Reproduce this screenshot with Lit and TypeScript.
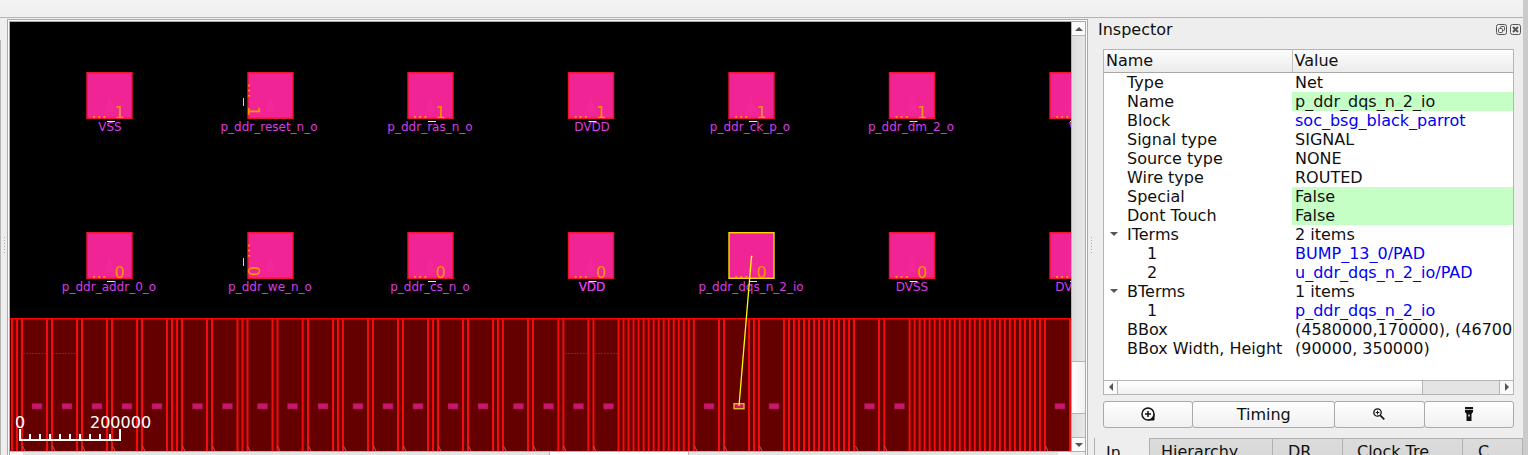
import { LitElement, html, svg, css, nothing } from "lit";
import { customElement } from "lit/decorators.js";
import { classMap } from "lit/directives/class-map.js";

const range = (start: number, count: number, step: number) =>
  Array.from({ length: count }, (_, i) => start + i * step);

/* Edges of the IO cells along the pad ring. */
const CELL_EDGES = [
  12, 17, 22, 47, 52, 77, 82, 107, 112, 137, 142, 167, 172, 177, 182, 207, 212,
  237.5, 242.5, 247.5, 272.5, 277.5, 302.7, 308, 333, 338, 343, 368, 373, 398,
  403, 428, 433, 438, 463, 468, 493, 498, 503, 528, 533, 558.4, 563.4, 588.4,
  593.5,
  ...range(618.5, 16, 5.02),
  719, 724, 749, 754, 759,
  ...range(784, 15, 5),
  879, 884.3,
  ...range(909.6, 28, 5.015),
  1070,
];

const PINS = [
  37, 67, 97, 127, 157, 197.5, 227.5, 262.5, 292.5, 323, 358, 388, 418, 453,
  483, 518.5, 548.5, 578.5, 608.5, 709, 774, 869.5, 899.5, 1060,
];

const CORNERS = [
  22, 52, 82, 112, 142, 182, 212, 247, 277, 308, 343, 373, 403, 438, 468, 503,
  533, 563, 593, 694, 724, 759, 855, 884, 1045,
];

interface Bump {
  x: number;
  label: string;
  at: number;
  turned?: boolean;
  selected?: boolean;
  doubled?: boolean;
  partial?: boolean;
}

const BUMP_ROWS: { y: number; digit: string; bumps: Bump[] }[] = [
  {
    y: 72,
    digit: "1",
    bumps: [
      { x: 86.5, label: "VSS", at: 110 },
      { x: 247.5, label: "p_ddr_reset_n_o", at: 269, turned: true },
      { x: 407.5, label: "p_ddr_ras_n_o", at: 430 },
      { x: 568, label: "DVDD", at: 592 },
      { x: 728.5, label: "p_ddr_ck_p_o", at: 750 },
      { x: 889, label: "p_ddr_dm_2_o", at: 911 },
      { x: 1049.5, label: "VDD", at: 1082, partial: true },
    ],
  },
  {
    y: 232,
    digit: "0",
    bumps: [
      { x: 86.5, label: "p_ddr_addr_0_o", at: 109 },
      { x: 247.5, label: "p_ddr_we_n_o", at: 270, turned: true },
      { x: 407.5, label: "p_ddr_cs_n_o", at: 430 },
      { x: 568, label: "VDD", at: 592, doubled: true },
      { x: 728.5, label: "p_ddr_dqs_n_2_io", at: 751, selected: true },
      { x: 889, label: "DVSS", at: 912 },
      { x: 1049.5, label: "DVDD", at: 1073, partial: true },
    ],
  },
];

@customElement("layout-view")
class LayoutView extends LitElement {
  static styles = css`
    :host {
      display: grid;
      grid-template-columns: 1fr 14px;
      grid-template-rows: auto 14px;
      border: 1px solid #aaa;
      outline: 1px solid #fafafa;
      outline-offset: 0;
      min-width: 0;
    }
    svg.chip {
      display: block;
      width: 100%;
      background: #000;
      font-family: "DejaVu Sans", sans-serif;
    }
    .net { font-size: 12px; fill: #d83ce6; text-anchor: middle; }
    .inst { font-size: 16px; fill: #ff9500; }
    .ruler { font-size: 16px; fill: #fff; }
    .vbar {
      display: flex;
      flex-direction: column;
      background: linear-gradient(90deg, #dcdcdc, #e8e8e8);
      border-left: 1px solid #b4b4b4;
    }
    .hbar {
      display: flex;
      background: #e4e4e4;
      border-top: 1px solid #b4b4b4;
    }
    .corner { background: #eee; border-top: 1px solid #b4b4b4; }
    .step {
      display: grid;
      place-items: center;
      flex: none;
      width: 13px;
      height: 13px;
      padding: 0;
      border: 0;
      background: #fafafa;
    }
    .up { border-bottom: 1px solid #b4b4b4; height: 14px; }
    .down { border-top: 1px solid #b4b4b4; height: 14px; }
    .fill { flex: 325; }
    .vthumb {
      flex: 51;
      background: linear-gradient(90deg, #fff, #f0f0f0);
      border: solid #b4b4b4;
      border-width: 1px 0;
    }
    .vrest { flex: 23; }
    .hleft { flex: 526; }
    .hthumb { flex: 138; background: #fff; border: solid #b4b4b4; border-width: 0 1px; }
    .hright { flex: 369; }
  `;

  private bump(b: Bump, y: number, digit: string) {
    const edge = b.selected ? "#ffd800" : "#f01428";
    const number = b.partial ? nothing : svg`<text x="23">${digit}</text>`;
    const text = b.turned
      ? svg`<g class="inst" transform="translate(${b.x + 0.5} ${y + 11}) rotate(90)">
            <text>...</text>${number}
          </g>
          <path d="M${b.x - 4} ${y + 26}v8" stroke="#eaea20"/>`
      : svg`<g class="inst" transform="translate(${b.x + 5} ${y + 46})">
            <text>...</text>${number}
          </g>
          <path d="M${b.x + 20.5} ${y + 49.5}h8" stroke="#ffff20"/>`;
    return svg`
      <rect x=${b.x + 0.5} y=${y + 0.7} width="45" height="45.6" fill="#f02495"
        stroke=${edge} stroke-width="1.4"/>
      <path d="M${b.x + 23} ${y + 24}l5 16h-10z" fill="#f22898"/>
      ${text}
      <text class="net" x=${b.at} y=${y + 59}>${b.label}</text>
      ${b.doubled ? svg`<text class="net" x=${b.at} y=${y + 59}>${b.label}</text>` : nothing}
    `;
  }

  render() {
    return html`
      <svg class="chip" height="429" role="img" aria-label="Chip layout">
        <g transform="translate(-10 -22)">
          ${BUMP_ROWS.map((r) => r.bumps.map((b) => this.bump(b, r.y, r.digit)))}
          <rect x="10" y="318" width="1061" height="140" fill="#640000"/>
          ${CELL_EDGES.map((x) => svg`<rect x=${x - 1} y="319" width="2" height="140" fill="#f40c0c"/>`)}
          <rect x="10" y="318" width="1061" height="1.4" fill="#ff0000"/>
          <path d="M23 353.5H46M53 353.5H76M565 353.5H588M595 353.5H618" stroke="#8c2020" stroke-dasharray="2 1"/>
          ${CORNERS.map((x) => svg`<path d="M${x + 0.5} 446l2.5 5" stroke="#b06060" fill="none"/>`)}
          ${PINS.map((x) => svg`<rect x=${x - 5} y="403.5" width="10" height="5.5" fill="#c8186c" stroke="#96104c" stroke-width=".5"/>`)}
          <rect x="734" y="403.7" width="10" height="5" fill="#c8186c" stroke="#e6b41e" stroke-width="1.4"/>
          <path d="M752.5 256.500h-1L739 406" fill="none" stroke="#ffff00" stroke-width="1.3"/>
          <text class="ruler" x="15" y="428">0</text>
          <text class="ruler" x="90" y="428">200000</text>
          <path d="M20 429v11h100v-11" fill="none" stroke="#fff" stroke-width="2"/>
          <path d=${range(30, 9, 10).map((x) => `M${x} 434v6`).join("")} stroke="#fff" stroke-width="2"/>
        </g>
      </svg>
      <div class="vbar">
        <button class="step up" aria-label="Scroll up"><svg width="8" height="4"><path d="M0 4 4 0l4 4z" fill="#555"/></svg></button>
        <div class="fill"></div>
        <div class="vthumb"></div>
        <div class="vrest"></div>
        <button class="step down" aria-label="Scroll down"><svg width="8" height="4"><path d="M0 0h8L4 4z" fill="#555"/></svg></button>
      </div>
      <div class="hbar">
        <button class="step" aria-label="Scroll left"><svg width="4" height="8"><path d="M4 0v8L0 4z" fill="#555"/></svg></button>
        <div class="hleft"></div>
        <div class="hthumb"></div>
        <div class="hright"></div>
        <button class="step" aria-label="Scroll right"><svg width="4" height="8"><path d="M0 0v8l4-4z" fill="#555"/></svg></button>
      </div>
      <div class="corner"></div>
    `;
  }
}

interface Prop {
  name: string;
  value: string;
  link?: boolean;
  editable?: boolean;
  open?: boolean;
  child?: boolean;
}

const PROPS: Prop[] = [
  { name: "Type", value: "Net" },
  { name: "Name", value: "p_ddr_dqs_n_2_io", editable: true },
  { name: "Block", value: "soc_bsg_black_parrot", link: true },
  { name: "Signal type", value: "SIGNAL" },
  { name: "Source type", value: "NONE" },
  { name: "Wire type", value: "ROUTED" },
  { name: "Special", value: "False", editable: true },
  { name: "Dont Touch", value: "False", editable: true },
  { name: "ITerms", value: "2 items", open: true },
  { name: "1", value: "BUMP_13_0/PAD", link: true, child: true },
  { name: "2", value: "u_ddr_dqs_n_2_io/PAD", link: true, child: true },
  { name: "BTerms", value: "1 items", open: true },
  { name: "1", value: "p_ddr_dqs_n_2_io", link: true, child: true },
  { name: "BBox", value: "(4580000,170000), (4670000,520000)" },
  { name: "BBox Width, Height", value: "(90000, 350000)" },
];

@customElement("inspector-panel")
class InspectorPanel extends LitElement {
  static styles = css`
    :host {
      display: flex;
      flex-direction: column;
      font: 16px/19px "DejaVu Sans", sans-serif;
      color: #101010;
    }
    button { font: inherit; color: inherit; padding: 0; }
    .title { display: flex; align-items: center; height: 20px; padding: 0 2px 0 4px; }
    h2 { flex: 1; margin: 0; font: inherit; }
    .dock { display: grid; width: 11px; height: 11px; margin-left: 3px; border: 0; background: none; }
    .frame {
      display: flex;
      flex-direction: column;
      margin: 10px 9px 0;
      border: 1px solid #b4b4b4;
      background: #fff;
    }
    .rows { overflow: hidden; padding-bottom: 22px; }
    table { width: 100%; table-layout: fixed; border-collapse: collapse; }
    .name { width: 188px; }
    th {
      box-sizing: border-box;
      height: 22px;
      padding: 0 2px;
      text-align: left;
      font-weight: normal;
      background: linear-gradient(#fdfdfd, #ebebeb);
      border-bottom: 1px solid #a8a8a8;
    }
    th + th { border-left: 1px solid #c4c4c4; }
    td { height: 19px; padding: 0 0 0 3px; white-space: nowrap; overflow: hidden; }
    .key { padding-left: 23px; }
    .key.open { padding-left: 6px; }
    .key.child { padding-left: 43px; }
    .twist { width: 17px; height: 19px; border: 0; background: none; text-align: left; vertical-align: top; }
    .twist svg { display: block; }
    .editable { background: #c5ffc5; }
    a { color: #0000f0; text-decoration: none; }
    .scroll { display: flex; height: 13px; border-top: 1px solid #b4b4b4; background: #e4e4e4; }
    .step { display: grid; place-items: center; width: 14px; border: 0; background: #fafafa; }
    .step.prev { border-right: 1px solid #b4b4b4; }
    .step.next { border-left: 1px solid #b4b4b4; }
    .thumb { flex: 305; background: linear-gradient(#fff, #f0f0f0); border-right: 1px solid #b4b4b4; }
    .rest { flex: 76; }
    .actions { display: flex; margin: 6px 9px 0; }
    .actions button {
      display: grid;
      place-items: center;
      flex: 90;
      height: 27px;
      border: 1px solid #aaa;
      border-radius: 3px;
      background: linear-gradient(#fff, #f0f0f0);
    }
    .actions button + button { margin-left: -1px; }
    .actions .wide { flex: 143; }
    .tabs { display: flex; margin-top: 10px; }
    .tabs button {
      flex: none;
      box-sizing: border-box;
      height: 24px;
      padding: 3px 0 0 15px;
      text-align: left;
      border: solid #b0b0b0;
      border-width: 1px 1px 0 0;
      background: linear-gradient(#dcdcdc, #d6d6d6);
    }
    .tabs .on { width: 56px; padding: 5px 0 0 11px; border-width: 0 1px; background: #eee; }
    .tabs .t1 { width: 123px; padding-left: 11px; }
    .tabs .t2 { width: 70px; }
    .tabs .t3 { width: 120px; padding-left: 14px; }
    .tabs .t4 { width: auto; flex: 1; }
  `;

  render() {
    return html`
      <div class="title">
        <h2>Inspector</h2>
        <button class="dock" aria-label="Float">
          <svg width="11" height="11" fill="none" stroke="#555"><rect x=".5" y=".5" width="10" height="10" rx="2"/><rect x="4.500" y="2.500" width="4" height="4" rx=".8"/><rect x="2.500" y="4.500" width="4" height="4" rx=".8" fill="#eee"/></svg>
        </button>
        <button class="dock" aria-label="Close">
          <svg width="11" height="11" fill="none" stroke="#555"><rect x=".5" y=".5" width="10" height="10" rx="2"/><path d="m3 3 5 5m0-5-5 5" stroke-width="2"/></svg>
        </button>
      </div>
      <div class="frame">
        <div class="rows">
          <table>
            <thead><tr><th class="name">Name</th><th>Value</th></tr></thead>
            <tbody>
              ${PROPS.map((p) => html`<tr>
                <td class=${classMap({ key: true, open: !!p.open, child: !!p.child })}>${p.open
                  ? html`<button class="twist" aria-label="Collapse"><svg width="8" height="4"><path d="M0 0h8L4 4z" fill="#555"/></svg></button>`
                  : nothing}${p.name}</td>
                <td class=${classMap({ editable: !!p.editable })}>${p.link ? html`<a href="#">${p.value}</a>` : p.value}</td>
              </tr>`)}
            </tbody>
          </table>
        </div>
        <div class="scroll">
          <button class="step prev" aria-label="Scroll left"><svg width="4" height="8"><path d="M4 0v8L0 4z" fill="#555"/></svg></button>
          <div class="thumb"></div>
          <div class="rest"></div>
          <button class="step next" aria-label="Scroll right"><svg width="4" height="8"><path d="M0 0v8l4-4z" fill="#555"/></svg></button>
        </div>
      </div>
      <div class="actions">
        <button aria-label="Zoom to">
          <svg width="14" height="14" fill="none" stroke="#111"><path d="M13 7v6H7z" fill="#111"/><circle cx="7" cy="7" r="6" fill="#f8f8f8" stroke-width="1.5"/><path d="M7 4v6M4 7h6" stroke-width="1.5"/></svg>
        </button>
        <button class="wide">Timing</button>
        <button aria-label="Zoom in">
          <svg width="12" height="12" fill="none" stroke="#111"><circle cx="4.500" cy="4.500" r="3.700" stroke-width="1.300"/><path d="m7.300 7.300 4 4" stroke-width="1.700"/><path d="M4.500 2.700v3.600M2.700 4.500h3.600"/></svg>
        </button>
        <button aria-label="Highlight">
          <svg width="8" height="14" fill="#111"><path d="M0 0h8v2.200H0zM0 3h8v2L6.500 7v7h-5V7L0 5z"/><rect x="3.300" y="7.500" width="1.400" height="2" fill="#fff"/></svg>
        </button>
      </div>
      <div class="tabs" role="tablist">
        <button class="on" role="tab" aria-selected="true">In</button>
        <button class="t1" role="tab">Hierarchy</button>
        <button class="t2" role="tab">DR</button>
        <button class="t3" role="tab">Clock Tre</button>
        <button class="t4" role="tab">C</button>
      </div>
    `;
  }
}

@customElement("app-root")
class AppRoot extends LitElement {
  static styles = css`
    :host {
      display: flex;
      height: 100vh;
      overflow: hidden;
      background: #eee;
    }
    .window { flex: 1; min-width: 0; }
    .toolbar {
      box-sizing: border-box;
      height: 18px;
      background: linear-gradient(#f3f3f3, #efefef);
      border-bottom: 1px solid #b4b4b4;
    }
    .work { display: flex; align-items: flex-start; padding-top: 1px; }
    .side { display: flex; width: 7px; height: 100vh; }
    .edge { width: 1px; margin-top: 21px; background: #b4b4b4; }
    .grip { margin: 218px 0 0 3px; fill: #aaa; }
    .gutter { width: 6px; }
    .gutter .grip { display: block; }
    .view { flex: 1; min-width: 0; border: 1px solid #aaa; padding: 1px; background: #fafafa; }
    .inspector { width: 429px; }
    .edge-right { width: 5px; background: #cbcbcb; }
  `;

  private grip() {
    return svg`<svg class="grip" width="2" height="18">${range(0, 6, 3).map(
      (y) => svg`<rect y=${y} width="1" height="1"/>`,
    )}</svg>`;
  }

  render() {
    return html`
      <div class="window">
        <div class="toolbar"></div>
        <div class="work">
          <div class="side"><div class="edge"></div>${this.grip()}</div>
          <div class="view"><layout-view></layout-view></div>
          <div class="gutter">${this.grip()}</div>
          <inspector-panel class="inspector"></inspector-panel>
        </div>
      </div>
      <div class="edge-right"></div>
    `;
  }
}
